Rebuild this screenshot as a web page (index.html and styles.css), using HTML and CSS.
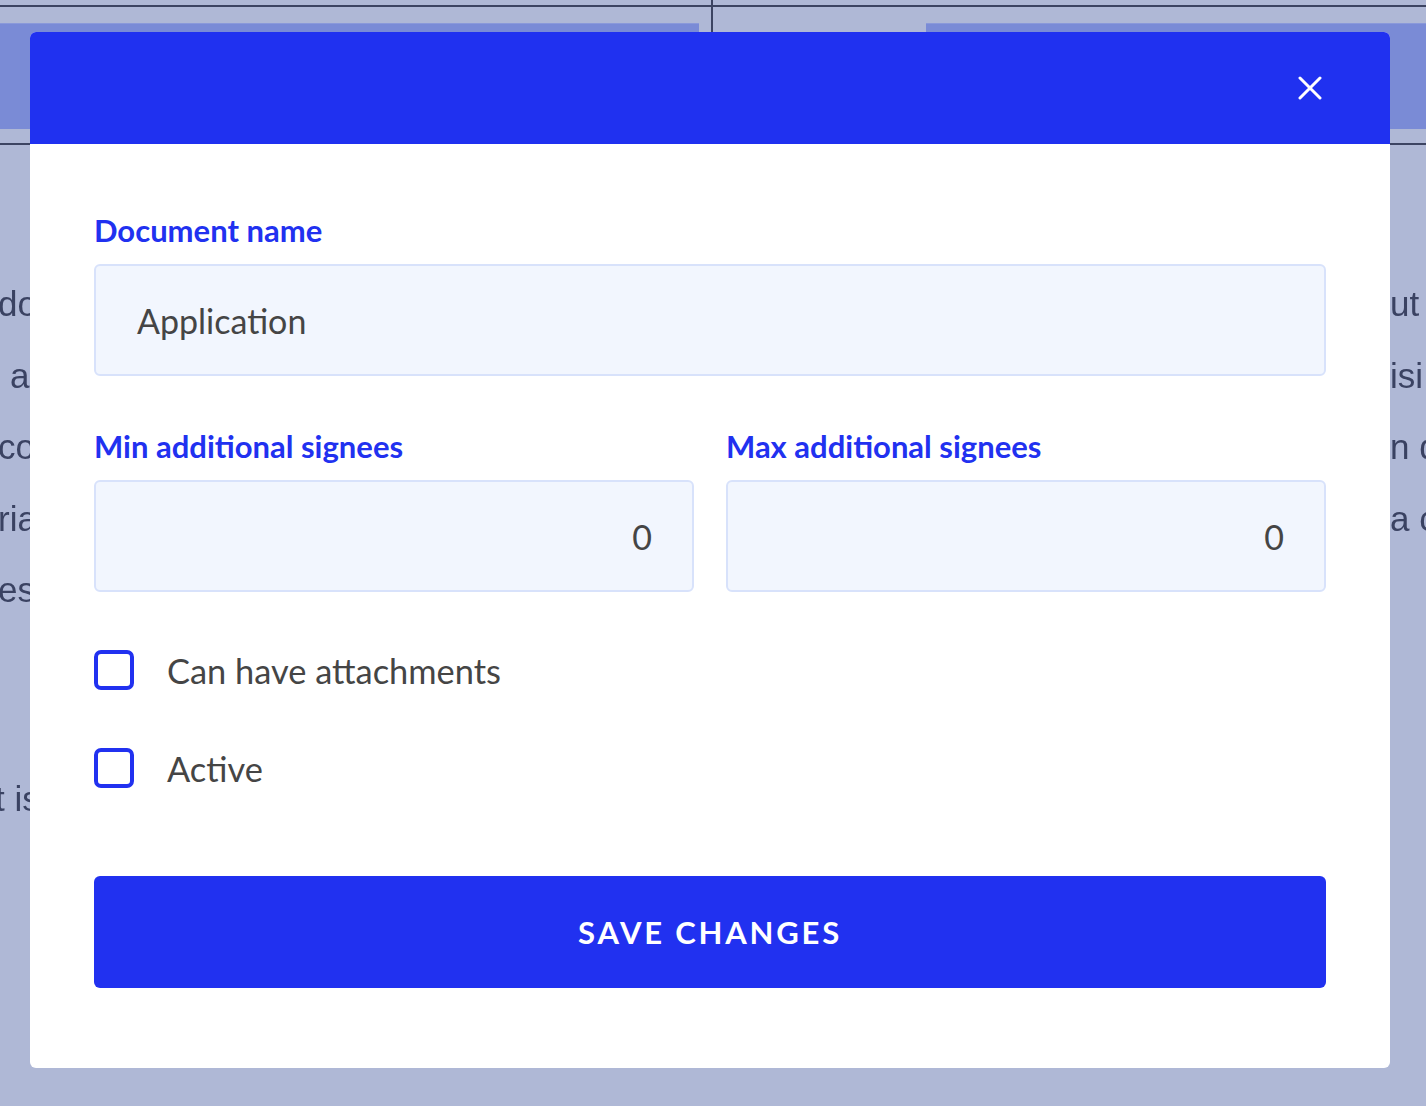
FILE: index.html
```html
<!DOCTYPE html>
<html lang="en">
<head>
<meta charset="utf-8">
<title>Edit document</title>
<link rel="stylesheet" href="styles.css">
</head>
<body>
<div class="page">
  <div class="bg-header">
    <div class="bg-topline"></div>
    <div class="bg-tabs">
      <div class="bg-tab bg-tab-left"></div>
      <div class="bg-tab-gap"></div>
      <div class="bg-tab bg-tab-right"></div>
    </div>
    <div class="bg-bottomline"></div>
  </div>
  <div class="bg-content">
    <div class="bg-col-left">
      <p class="bg-para">
        <span class="bg-line">document</span>
        <span class="bg-line bg-indent">a form</span>
        <span class="bg-line">conditions</span>
        <span class="bg-line">rial</span>
        <span class="bg-line">essential</span>
      </p>
      <p class="bg-para bg-para-second">
        <span class="bg-line bg-cut">t is</span>
      </p>
    </div>
    <div class="bg-col-right">
      <p class="bg-para">
        <span class="bg-line">ut the</span>
        <span class="bg-line">isi on</span>
        <span class="bg-line">n document</span>
        <span class="bg-line">a copy</span>
      </p>
    </div>
  </div>
</div>

<div class="overlay">
  <div class="modal">
    <div class="modal-header">
      <button class="close-btn" aria-label="Close">
        <svg width="24" height="24" viewBox="0 0 24 24" fill="none" stroke="#ffffff" stroke-width="3" stroke-linecap="round">
          <path d="M2 2 L22 22 M22 2 L2 22"/>
        </svg>
      </button>
    </div>
    <form class="modal-body">
      <div class="field">
        <label class="field-label">Document name</label>
        <div class="input input-text">Application</div>
      </div>
      <div class="field-row">
        <div class="field">
          <label class="field-label">Min additional signees</label>
          <div class="input input-number">0</div>
        </div>
        <div class="field">
          <label class="field-label">Max additional signees</label>
          <div class="input input-number">0</div>
        </div>
      </div>
      <div class="checks">
        <label class="check"><span class="check-box"></span><span class="check-label">Can have attachments</span></label>
        <label class="check"><span class="check-box"></span><span class="check-label">Active</span></label>
      </div>
      <button type="button" class="save-btn">SAVE CHANGES</button>
    </form>
  </div>
</div>
</body>
</html>
```

FILE: styles.css
```css
* { box-sizing: border-box; }
html, body { margin: 0; padding: 0; }
body {
  width: 1426px;
  height: 1106px;
  overflow: hidden;
  font-family: Lato, "Noto Sans", sans-serif;
  background: #afb8d6;
}

/* ---------- dimmed background page ---------- */
.page {
  height: 1106px;
  background: #afb8d6;
  overflow: hidden;
  filter: blur(0.6px);
}
.bg-header {
  position: relative;
  padding-top: 5px;
}
.bg-header::after {
  content: "";
  position: absolute;
  left: 711px;
  top: 0;
  width: 2px;
  height: 40px;
  background: #3c4462;
}
.bg-topline {
  height: 2px;
  background: #3c4462;
}
.bg-tabs {
  display: flex;
  margin-top: 16px;
  height: 106px;
}
.bg-tab {
  background: #7a8bd6;
  border-top: 1px solid #8a99da;
}
.bg-tab-left { width: 699px; }
.bg-tab-gap { width: 227px; }
.bg-tab-right { flex: 1; }
.bg-bottomline {
  margin-top: 14px;
  height: 2px;
  background: #3c4462;
}
.bg-content {
  display: flex;
  justify-content: space-between;
  padding-top: 123px;
  font-family: "Liberation Sans", Arial, sans-serif;
  font-size: 35px;
  color: #3a4262;
}
.bg-col-left {
  width: 30px;
  overflow: hidden;
  white-space: nowrap;
}
.bg-col-right {
  width: 36px;
  overflow: hidden;
  white-space: nowrap;
}
.bg-para {
  margin: 0;
  line-height: 71.5px;
}
.bg-para-second { margin-top: 137px; }
.bg-line { display: block; }
.bg-col-left .bg-line { margin-left: -2px; }
.bg-col-left .bg-indent { margin-left: 0; padding-left: 10px; }
.bg-col-left .bg-cut { margin-left: -5px; }

/* ---------- modal ---------- */
.overlay {
  position: fixed;
  inset: 0;
  display: flex;
  justify-content: flex-start;
  align-items: flex-start;
  padding: 32px 0 0 30px;
}
.modal {
  width: 1360px;
  background: #ffffff;
  border-radius: 6px;
  overflow: hidden;
}
.modal-header {
  height: 112px;
  background: #2031f0;
  display: flex;
  align-items: center;
  justify-content: flex-end;
  padding-right: 68px;
}
.close-btn {
  width: 24px;
  height: 24px;
  padding: 0;
  border: 0;
  background: none;
  display: flex;
  cursor: pointer;
}
.modal-body {
  display: flex;
  flex-direction: column;
  padding: 68px 64px 80px;
  margin: 0;
}
.field {
  display: flex;
  flex-direction: column;
  flex: 1;
}
.field-label {
  font-size: 31px;
  line-height: 36px;
  font-weight: 700;
  color: #2131f0;
  margin-bottom: 16px;
}
.input {
  height: 112px;
  background: #f2f6fe;
  border: 2px solid #d8e2fb;
  border-radius: 6px;
  display: flex;
  align-items: center;
  padding: 0 41px;
  font-size: 34px;
  color: #454545;
}
.input-number {
  justify-content: flex-end;
  padding-right: 40px;
}
.field-row {
  display: flex;
  gap: 32px;
  margin-top: 52px;
}
.checks {
  display: flex;
  flex-direction: column;
  gap: 58px;
  margin-top: 58px;
}
.check {
  display: flex;
  align-items: center;
  height: 40px;
  gap: 33px;
}
.check-box {
  width: 40px;
  height: 40px;
  border: 4px solid #2131f0;
  border-radius: 7px;
  flex: none;
}
.check-label {
  font-size: 34.4px;
  color: #454545;
}
.save-btn {
  margin-top: 88px;
  height: 112px;
  border: 0;
  border-radius: 6px;
  background: #2131f0;
  color: #ffffff;
  font-family: Lato, "Noto Sans", sans-serif;
  font-size: 31px;
  font-weight: 700;
  letter-spacing: 2.8px;
  cursor: pointer;
}
```
